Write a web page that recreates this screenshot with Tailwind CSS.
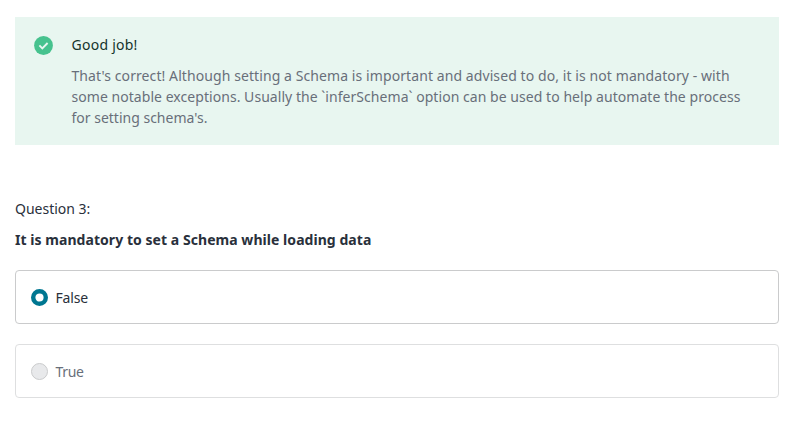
<!DOCTYPE html>
<html lang="en">
<head>
<meta charset="utf-8">
<title>Quiz</title>
<script src="https://cdn.jsdelivr.net/npm/@tailwindcss/browser@4"></script>
</head>
<body class="bg-white font-['Noto_Sans',sans-serif] text-[14px] text-[#29303b]">
<main class="pt-[17px] pl-[15px] w-[779px]">
  <section class="flex h-[128px] bg-[#e8f6f0] pl-[19px] pt-[17px]">
    <svg class="mt-[2px] size-[19px] shrink-0" viewBox="0 0 19 19"><circle cx="9.5" cy="9.5" r="9.4" fill="#46c28e"/><path d="M5.4 9.4l2.9 2.9 5.3-5.3" fill="none" stroke="#e8f6f0" stroke-width="1.9"/></svg>
    <div class="ml-[18.5px] whitespace-nowrap leading-[21px]">
      <h2 class="tracking-[0.25px] text-[#14342b]">Good job!</h2>
      <p class="mt-[10px] text-[#686f7a]"><span class="tracking-[0.085px]">That's correct! Although setting a Schema is important and advised to do, it is not mandatory - with</span><br><span class="tracking-[0.047px]">some notable exceptions. Usually the `inferSchema` option can be used to help automate the process</span><br>for setting schema's.</p>
    </div>
  </section>
  <p class="mt-[53px] leading-[21px]">Question 3:</p>
  <p class="mt-[10px] font-bold leading-[21px] tracking-[0.05px]">It is mandatory to set a Schema while loading data</p>
  <div class="mt-[20px] flex h-[54px] items-center gap-[7.5px] rounded-[4px] border border-[#cacbcc] px-[15px] tracking-[-0.2px]"><svg class="size-[17px]" viewBox="0 0 17 17"><circle cx="8.5" cy="8.5" r="6.3" fill="#fff" stroke="#007791" stroke-width="4.4"/></svg>False</div>
  <div class="mt-[20px] flex h-[54px] items-center gap-[7.5px] rounded-[4px] border border-[#dedfe0] px-[15px] tracking-[-0.3px] text-[#686f7a]"><span class="size-[17px] rounded-full border border-[#cacbcc] bg-[#e8e9eb]"></span>True</div>
</main>
</body>
</html>
